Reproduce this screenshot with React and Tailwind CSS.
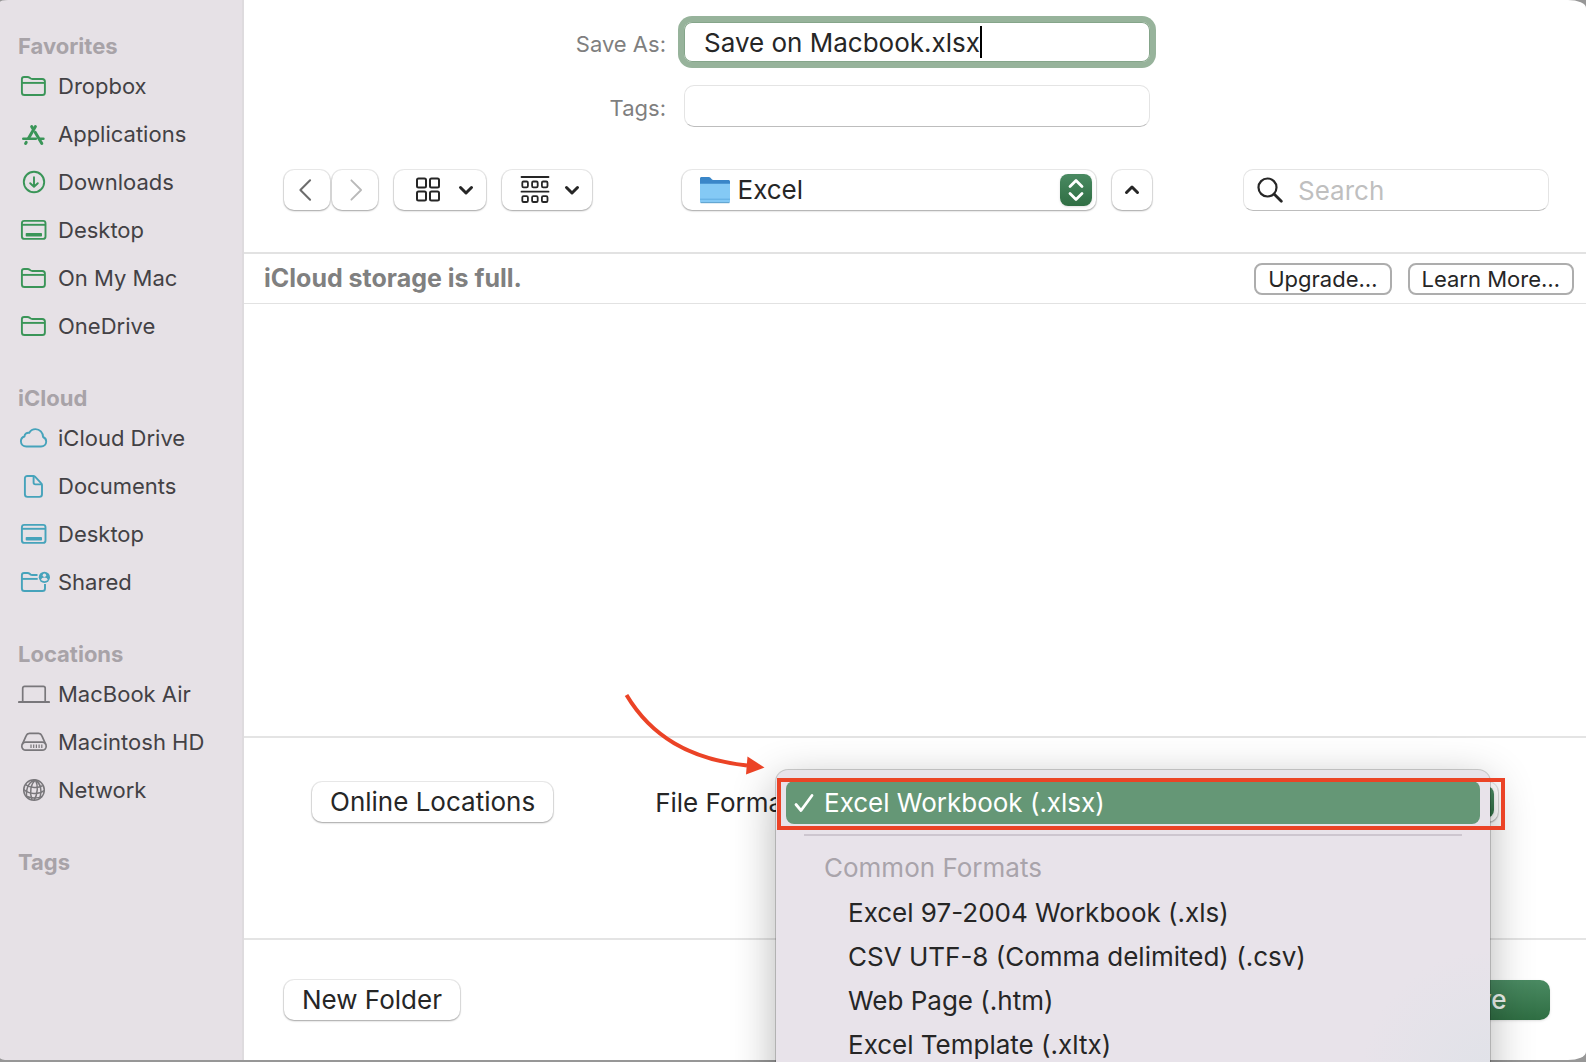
import React, { useState } from 'react';
import clsx from 'clsx';

const FolderIcon = () => (
  <svg viewBox="0 0 32 32" className="w-8 h-8" fill="none" stroke="currentColor" strokeWidth="1.9" strokeLinejoin="round">
    <path d="M3.9 9.2c0-1.5.8-2.2 2.2-2.2h3.4c1 0 1.5.2 2.2.8l.7.6c.6.5 1 .6 1.9.6h9.9c1.7 0 2.7.9 2.7 2.6v10.8c0 1.7-.9 2.6-2.6 2.6H6.5c-1.7 0-2.6-.9-2.6-2.6z" />
    <path d="M4 12.9h23" />
  </svg>
);

const AppsIcon = () => (
  <svg viewBox="0 0 32 32" className="w-8 h-8" fill="none" stroke="currentColor" strokeWidth="3" strokeLinecap="round">
    <path d="M17.4 8.6l-7 11.8" />
    <path d="M13.7 8.6l1.6 2.6" />
    <path d="M17.3 14.4l6.5 11" />
    <path d="M5.3 20.8h12.500M22.500 20.8h2.900" strokeWidth="2.6" />
    <path d="M8.2 24.4l-.6 1" />
  </svg>
);

const DownloadIcon = () => (
  <svg viewBox="0 0 32 32" className="w-8 h-8" fill="none" stroke="currentColor" strokeWidth="1.9" strokeLinecap="round" strokeLinejoin="round">
    <circle cx="16" cy="16" r="10.2" />
    <path d="M16 11.200v9.400M12.200 17.200l3.800 3.600 3.800-3.600" />
  </svg>
);

const DesktopIcon = () => (
  <svg viewBox="0 0 32 32" className="w-8 h-8" fill="none" stroke="currentColor" strokeWidth="1.9">
    <rect x="3.9" y="6.9" width="23.6" height="18" rx="2.4" />
    <path d="M4 10.8h23.400" />
    <rect x="7.7" y="19" width="16.3" height="3.6" rx="0.8" fill="currentColor" stroke="none" />
  </svg>
);

const CloudIcon = () => (
  <svg viewBox="0 0 32 32" className="w-8 h-8" fill="none" stroke="currentColor" strokeWidth="1.9" strokeLinejoin="round">
    <path d="M8.4 24.5h14.600c3 0 5.200-2.200 5.200-5 0-2.100-1.200-3.700-3.100-4.500-.1-4.600-3.400-7.900-7.600-7.900-2.800 0-5 1.500-6.200 3.700-2.600-.5-4.700 1.300-4.800 3.700-2.200.7-3.600 2.500-3.600 4.800 0 3 2.400 5.200 5.500 5.200z" />
  </svg>
);

const DocumentIcon = () => (
  <svg viewBox="0 0 32 32" className="w-8 h-8" fill="none" stroke="currentColor" strokeWidth="1.9" strokeLinejoin="round">
    <path d="M9.5 6h5.700c.8 0 1.300.2 1.800.7l6.300 6.600c.5.5.7 1 .7 1.800v9.200c0 1.700-.9 2.600-2.600 2.600H9.500c-1.700 0-2.600-.9-2.600-2.600V8.600C6.900 6.900 7.800 6 9.500 6z" />
    <path d="M15.6 6.2v6.400c0 1.200.6 1.800 1.800 1.800h6.400" />
  </svg>
);

const SharedIcon = () => (
  <svg viewBox="0 0 32 32" className="w-8 h-8 overflow-visible" fill="none" stroke="currentColor" strokeWidth="1.9" strokeLinejoin="round">
    <path d="M19.500 9h-5.200c-.9 0-1.300-.1-1.900-.6l-.7-.6C11 7.200 10.500 7 9.500 7H6.100C4.700 7 3.900 7.700 3.900 9.200v13.200c0 1.700.9 2.600 2.600 2.600h17.900c1.700 0 2.600-.9 2.600-2.600v-4.300" />
    <path d="M4 12.900h15.700" />
    <circle cx="26.4" cy="11.3" r="5.6" fill="currentColor" stroke="none" />
    <circle cx="26.4" cy="9.3" r="1.7" fill="#e6e1e6" stroke="none" />
    <path d="M23 14.100c.4-1.700 1.700-2.500 3.400-2.500s3 .8 3.400 2.500c-1.800 1.500-5 1.500-6.800 0z" fill="#e6e1e6" stroke="none" />
  </svg>
);

const LaptopIcon = () => (
  <svg viewBox="0 0 32 32" className="w-8 h-8" fill="none" stroke="currentColor" strokeWidth="1.7">
    <path d="M4.7 23V10.200c0-1.200.7-1.900 1.900-1.900h18.700c1.200 0 1.900.7 1.900 1.900V23" />
    <path d="M1 24h30" strokeWidth="2.2" strokeLinecap="round" />
  </svg>
);

const DriveIcon = () => (
  <svg viewBox="0 0 32 32" className="w-8 h-8" fill="none" stroke="currentColor" strokeWidth="1.7" strokeLinejoin="round">
    <path d="M4.2 18.600l4-9c.6-1.500 1.500-2.300 3.200-2.300h9.200c1.700 0 2.600.8 3.200 2.300l4 9" />
    <rect x="3.8" y="16.2" width="24.4" height="8" rx="4" />
    <path d="M13 18.600v3.400M15.700 18.600v3.400M18.400 18.600v3.400M21.100 18.600v3.400M23.800 18.600v3.400" strokeWidth="1.2" />
  </svg>
);

const NetworkIcon = () => (
  <svg viewBox="0 0 32 32" className="w-8 h-8" fill="none" stroke="currentColor" strokeWidth="1.5">
    <circle cx="16" cy="16" r="10.3" />
    <path d="M17.500 5.800c-4.500 4-6.500 12-3.500 20.200M17.500 5.800c2.600 5.400 2.600 14-1.500 20.400M17.500 5.800c-5.600 1.200-9.500 7.200-9 16.200M17.500 5.800c4.800 3.200 7 10.200 4.500 18" />
    <path d="M7.500 10.600c4.500 3.400 12.500 3.900 17.300 1M5.800 15.500c5.500 5 14.500 5.500 20.400 1M8 22.300c4.500 2 11.500 2.200 16.200.3" />
  </svg>
);

const Chevron = ({ up = false }) => (
  <svg viewBox="0 0 16 12" className={clsx('w-4 h-3', up && 'rotate-180')} fill="none" stroke="currentColor" strokeWidth="3" strokeLinecap="round" strokeLinejoin="round">
    <path d="M2.500 3.500L8 9l5.500-5.500" />
  </svg>
);

const Stepper = () => (
  <span className="w-8 h-8 shrink-0 rounded-lg bg-linear-to-b from-[#4a8a62] to-[#2f6e43] shadow-sm pointer-events-none">
    <svg viewBox="0 0 32 32" className="w-8 h-8" fill="none" stroke="#fff" strokeWidth="2.8" strokeLinecap="round" strokeLinejoin="round">
      <path d="M10 12.500l6-6 6 6M10 19.500l6 6 6-6" />
    </svg>
  </span>
);

const SECTIONS = [
  {
    title: 'Favorites',
    color: 'text-[#3a9558]',
    items: [
      { name: 'Dropbox', icon: FolderIcon },
      { name: 'Applications', icon: AppsIcon },
      { name: 'Downloads', icon: DownloadIcon },
      { name: 'Desktop', icon: DesktopIcon },
      { name: 'On My Mac', icon: FolderIcon },
      { name: 'OneDrive', icon: FolderIcon },
    ],
  },
  {
    title: 'iCloud',
    color: 'text-[#46a3bb]',
    items: [
      { name: 'iCloud Drive', icon: CloudIcon },
      { name: 'Documents', icon: DocumentIcon },
      { name: 'Desktop', icon: DesktopIcon },
      { name: 'Shared', icon: SharedIcon },
    ],
  },
  {
    title: 'Locations',
    color: 'text-[#79777b]',
    items: [
      { name: 'MacBook Air', icon: LaptopIcon },
      { name: 'Macintosh HD', icon: DriveIcon },
      { name: 'Network', icon: NetworkIcon },
    ],
  },
  { title: 'Tags', color: '', items: [] },
];

const COMMON_FORMATS = [
  'Excel 97-2004 Workbook (.xls)',
  'CSV UTF-8 (Comma delimited) (.csv)',
  'Web Page (.htm)',
  'Excel Template (.xltx)',
];

const raised = 'bg-white rounded-[10px] shadow-[0_0_0_1px_rgba(0,0,0,0.08),0_1px_2px_rgba(0,0,0,0.3)]';

const Sidebar = () => (
  <nav className="w-[244px] shrink-0 flex flex-col gap-8 pt-[30px] bg-[#e6e1e6] border-r-2 border-[#dedbde] rounded-[8px_0_0_8px/2px_0_0_2px]">
    {SECTIONS.map((section) => (
      <section key={section.title}>
        <h2 className="pl-[18px] leading-8 font-bold text-[#a8a3a8]">{section.title}</h2>
        {section.items.map(({ name, icon: Icon }) => (
          <button key={name} type="button" className="w-full h-12 flex items-center gap-2 pl-[18px] text-left text-[#434145]">
            <span className={section.color}><Icon /></span>
            {name}
          </button>
        ))}
      </section>
    ))}
  </nav>
);

const NameForm = () => {
  const [name, setName] = useState('Save on Macbook.xlsx');
  const [tags, setTags] = useState('');

  return (
    <div className="grid grid-cols-[1fr_466px_1fr] items-center gap-y-[23px] pl-[42px] pr-[38px] pt-[22px]">
      <label htmlFor="save-as" className="pr-[18px] pt-1 text-right text-[#7f7f7f]">Save As:</label>
      <div className="h-10 flex items-center pl-5 bg-white rounded-lg ring-6 ring-[#97b39b] shadow-[inset_0_0_0_1px_#85a58a] text-[26px]">
        <input
          id="save-as"
          type="text"
          value={name}
          onChange={(e) => setName(e.target.value)}
          className="field-sizing-content outline-none caret-transparent text-[#262626]"
        />
        <span className="w-[2px] h-8 bg-black" />
      </div>
      <span />
      <label htmlFor="tags" className="pr-[18px] pt-1 text-right text-[#7f7f7f]">Tags:</label>
      <input
        id="tags"
        type="text"
        value={tags}
        onChange={(e) => setTags(e.target.value)}
        className="h-[42px] w-full px-5 rounded-[10px] border border-[#e4e4e4] border-b-[#bdbdbd] outline-none text-[26px]"
      />
    </div>
  );
};

const Toolbar = () => (
  <div className="grid grid-cols-[1fr_470px_1fr] items-center pl-10 pr-[37px] pt-[42px] pb-[41px] text-[#262626]">
    <div className="flex">
      <button type="button" aria-label="Back" className={clsx(raised, 'w-[46px] h-10 flex items-center pl-[13px] mr-[2px] text-[#6d6d6d]')}>
        <svg viewBox="0 0 16 26" className="w-4 h-6" fill="none" stroke="currentColor" strokeWidth="2.2" strokeLinecap="round" strokeLinejoin="round"><path d="M13.500 2.500L3 13l10.500 10.500" /></svg>
      </button>
      <button type="button" aria-label="Forward" className={clsx(raised, 'w-[46px] h-10 flex items-center pl-4 mr-4 text-[#b9b9b9]')}>
        <svg viewBox="0 0 16 26" className="w-4 h-6" fill="none" stroke="currentColor" strokeWidth="2" strokeLinecap="round" strokeLinejoin="round"><path d="M3 2.500L13.500 13 3 23.500" /></svg>
      </button>
      <button type="button" aria-label="Icon view" className={clsx(raised, 'w-[92px] h-10 flex items-center justify-between pl-[21px] pr-3 mr-4')}>
        <svg viewBox="0 0 26 26" className="w-[26px] h-[26px]" fill="none" stroke="currentColor" strokeWidth="2">
          <rect x="2" y="1.5" width="9" height="9" rx="1.5" />
          <rect x="15" y="1.5" width="9" height="9" rx="1.5" />
          <rect x="2" y="14.500" width="9" height="9" rx="1.5" />
          <rect x="15" y="14.500" width="9" height="9" rx="1.5" />
        </svg>
        <Chevron />
      </button>
      <button type="button" aria-label="Group by" className={clsx(raised, 'w-[90px] h-10 flex items-center justify-between pl-[18px] pr-3')}>
        <svg viewBox="0 0 30 30" className="w-[30px] h-[30px]" fill="none" stroke="currentColor" strokeWidth="1.8">
          <path d="M1.500 2h27M1.500 16.700h27" strokeLinecap="round" />
          <rect x="2.3" y="6.5" width="5.6" height="5.8" rx="1.3" />
          <rect x="12.1" y="6.5" width="5.6" height="5.8" rx="1.3" />
          <rect x="21.9" y="6.5" width="5.6" height="5.8" rx="1.3" />
          <rect x="2.3" y="21.2" width="5.6" height="5.8" rx="1.3" />
          <rect x="12.1" y="21.2" width="5.6" height="5.8" rx="1.3" />
          <rect x="21.9" y="21.2" width="5.6" height="5.8" rx="1.3" />
        </svg>
        <Chevron />
      </button>
    </div>

    <div className="flex gap-4">
      <div className={clsx(raised, 'flex-1 h-10 flex items-center gap-2 pl-[18px] pr-1')}>
        <svg viewBox="0 0 30 32" className="w-[30px] h-8">
          <path d="M0 4.500C0 3.600.6 3 1.500 3h7.300c.8 0 1.200.2 1.700.8l1.300 1.500c.4.4.8.6 1.500.6h15.200c.9 0 1.500.6 1.500 1.500V14H0z" fill="#3a86c8" />
          <path d="M0 9.800h30v17.700c0 .9-.6 1.500-1.500 1.500h-27C.6 29 0 28.400 0 27.500z" fill="#84c9f5" />
          <path d="M0 25.200h30" stroke="#5fabe0" strokeWidth="1" />
          <path d="M.6 28.700h28.800" stroke="#5d9fca" strokeWidth="1" />
        </svg>
        <select aria-label="Location" className="flex-1 appearance-none bg-transparent outline-none text-[26px] leading-9">
          <option>Excel</option>
        </select>
        <Stepper />
      </div>
      <button type="button" aria-label="Collapse" className={clsx(raised, 'w-10 h-10 grid place-items-center')}>
        <Chevron up />
      </button>
    </div>

    <label className="ml-auto w-[306px] h-[42px] flex items-center gap-[15px] pl-[13px] pr-3 rounded-[10px] border border-[#e4e4e4] border-b-[#bdbdbd]">
      <svg viewBox="0 0 26 26" className="w-[26px] h-[26px] shrink-0" fill="none" stroke="currentColor" strokeWidth="2.2" strokeLinecap="round">
        <circle cx="10.5" cy="10.5" r="9" />
        <path d="M17.300 17.300l7 7" strokeWidth="2.8" />
      </svg>
      <input type="search" placeholder="Search" aria-label="Search" className="min-w-0 flex-1 outline-none text-[26px] placeholder:text-[#bfbfbf]" />
    </label>
  </div>
);

const StorageBanner = () => (
  <div className="h-[52px] flex items-center gap-4 pl-5 pr-3 border-t-2 border-b border-[#e2e2e2]">
    <p className="flex-1 text-[25px] font-bold text-[#808080]">iCloud storage is full.</p>
    <button type="button" className="h-8 px-3 leading-7 rounded-lg border-2 border-[#adadad] text-[#262626]">Upgrade…</button>
    <button type="button" className="h-8 px-3 leading-7 rounded-lg border-2 border-[#adadad] text-[#262626]">Learn More…</button>
  </div>
);

const FormatMenu = () => (
  <div
    role="listbox"
    aria-label="File Format"
    className="absolute top-8 left-[532px] right-24 h-[480px] px-[10px] pt-[11px] rounded-xl bg-[#e8e3ea] bg-[radial-gradient(circle_at_100%_310px,#e0e2e8,#e8e3ea_130px)] shadow-[0_0_0_1px_rgba(0,0,0,0.18),0_12px_44px_rgba(0,0,0,0.3)] text-[26px] text-[#262626]"
  >
    <button type="button" role="option" aria-selected="true" className="w-full h-[43px] flex items-center gap-[10px] pl-2 rounded-lg bg-[#659776] text-white">
      <svg viewBox="0 0 20 20" className="w-5 h-5" fill="none" stroke="currentColor" strokeWidth="2.8" strokeLinecap="round" strokeLinejoin="round">
        <path d="M2 11.500l5 6L18 2.500" />
      </svg>
      Excel Workbook (.xlsx)
    </button>
    <hr className="mx-[18px] mt-[10px] mb-[10px] border-t-2 border-[#cdc6cf]" />
    <p className="pl-[38px] leading-[44px] text-[#a9a4ab]">Common Formats</p>
    {COMMON_FORMATS.map((format) => (
      <button key={format} type="button" role="option" aria-selected="false" className="w-full h-11 pl-[62px] text-left">
        {format}
      </button>
    ))}
  </div>
);

const FormatRow = () => (
  <div className="relative h-[202px] flex items-start pl-[68px] pr-[88px] pt-11 border-t-2 border-[#e4e4e4] text-[26px] text-[#262626]">
    <button type="button" className={clsx(raised, 'h-10 px-[18px] mr-[102px] leading-9')}>Online Locations</button>
    <label htmlFor="file-format" className="mr-2 leading-[42px]">File Format:</label>
    <div className={clsx(raised, 'flex-1 h-10 flex items-center pl-4 pr-1')}>
      <select id="file-format" className="flex-1 appearance-none bg-transparent outline-none">
        <option>Excel Workbook (.xlsx)</option>
      </select>
      <Stepper />
    </div>
    <FormatMenu />
    <div className="absolute top-10 left-[533px] right-[81px] h-[52px] border-4 border-[#eb4326] pointer-events-none" />
    {/* callout arrow pointing at the chosen format */}
    <svg viewBox="0 0 150 90" className="absolute -top-12 left-[375px] w-[150px] h-[90px] pointer-events-none">
      <path d="M7.500 5C32 46 70 69 128 75.500" fill="none" stroke="#eb4326" strokeWidth="4" />
      <path d="M128.500 66.500l17 11-18.500 7z" fill="#eb4326" />
    </svg>
  </div>
);

export default function App() {
  return (
    <div className="h-screen overflow-hidden pb-[2px] bg-[#979797] font-['Inter','Liberation_Sans',sans-serif] text-[22px]">
      <div className="h-full flex">
        <Sidebar />
        <main className="flex-1 min-w-0 flex flex-col bg-white rounded-[0_18px_18px_0/0_8px_8px_0]">
          <NameForm />
          <Toolbar />
          <StorageBanner />
          <div className="flex-1" />
          <FormatRow />
          <div className="h-[122px] shrink-0 flex justify-between items-start pl-10 pr-9 pt-10 border-t-2 border-[#e4e4e4] text-[26px]">
            <button type="button" className={clsx(raised, 'h-10 px-[18px] leading-9 text-[#262626]')}>New Folder</button>
            <button type="button" className="w-[148px] h-10 leading-9 rounded-[10px] bg-linear-to-b from-[#4a8a62] to-[#2f6e43] font-medium text-[#eef3ef] shadow-sm">Save</button>
          </div>
        </main>
      </div>
    </div>
  );
}
